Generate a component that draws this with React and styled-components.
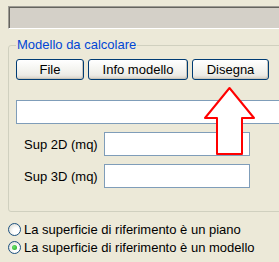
import React from 'react';
import styled, { createGlobalStyle } from 'styled-components';

const GlobalStyle = createGlobalStyle`
  html, body {
    margin: 0;
    padding: 0;
    background: #ece9d8;
  }
  body {
    font-family: "Liberation Sans", Arial, sans-serif;
    font-size: 13px;
    color: #000;
  }
`;

const Page = styled.div`
  position: relative;
  width: 279px;
  height: 262px;
  overflow: hidden;
  background: #ece9d8;
  padding: 6px 0 0 8px;
  box-sizing: border-box;
`;

const Wide = styled.div`
  width: 320px;
  display: flex;
  flex-direction: column;
`;

const StatusBar = styled.div`
  height: 21px;
  background: #d4d0c8;
  border-top: 1px solid #9d9b94;
  border-left: 1px solid #9d9b94;
  border-bottom: 1px solid #ffffff;
  box-shadow: inset 1px 1px 0 #65645e;
`;

const Group = styled.fieldset`
  margin: 9px 0 0 0;
  padding: 7px 7px 23px 7px;
  border: 1px solid #d0d0bf;
  border-radius: 3px;
  min-width: 0;
  display: flex;
  flex-direction: column;
`;

const Legend = styled.legend`
  padding: 0 1px;
  color: #0046d5;
  line-height: 14px;
`;

const ButtonRow = styled.div`
  display: flex;
  gap: 4px;
`;

const Button = styled.button`
  width: ${({ w }) => w}px;
  height: 21px;
  padding: 0;
  font-family: inherit;
  font-size: 13px;
  color: #000;
  border: 1px solid #003c74;
  border-radius: 3px;
  background: linear-gradient(#ffffff 0%, #f4f4f0 50%, #ecebe6 80%, #d6d0c5 100%);
  box-shadow: inset -1px -1px 0 #c9c6bb;
`;

const TextBox = styled.div`
  height: 22px;
  width: ${({ w }) => (w ? `${w}px` : 'auto')};
  background: #fff;
  border: 1px solid #7f9db9;
`;

const WideBox = styled(TextBox)`
  margin-top: 20px;
`;

const FieldRow = styled.div`
  display: flex;
  align-items: center;
  padding-left: 8px;
  margin-top: 8px;
`;

const Label = styled.span`
  width: 80px;
`;

const RadioList = styled.div`
  margin-top: 8px;
  display: flex;
  flex-direction: column;
`;

const RadioRow = styled.div`
  height: 18px;
  display: flex;
  align-items: center;
  gap: 3px;
`;

const RadioDot = styled.span`
  width: 11px;
  height: 11px;
  border: 1px solid #1c5180;
  border-radius: 50%;
  background: radial-gradient(circle at 65% 65%, #ffffff 30%, #e2e2dc 75%, #cbcbc3 100%);
  display: flex;
  align-items: center;
  justify-content: center;
  &::after {
    content: '';
    width: 5px;
    height: 5px;
    border-radius: 50%;
    background: ${({ checked }) => (checked ? 'radial-gradient(circle at 40% 40%, #6be46b, #21a121)' : 'transparent')};
  }
`;

const Arrow = styled.svg`
  position: absolute;
  left: 0;
  top: 0;
  pointer-events: none;
`;

const App = () => (
  <>
    <GlobalStyle />
    <Page>
      <Wide>
        <StatusBar />
        <Group>
          <Legend>Modello da calcolare</Legend>
          <ButtonRow>
            <Button w={68}>File</Button>
            <Button w={100}>Info modello</Button>
            <Button w={77}>Disegna</Button>
          </ButtonRow>
          <WideBox />
          <FieldRow>
            <Label>Sup 2D (mq)</Label>
            <TextBox w={144} />
          </FieldRow>
          <FieldRow>
            <Label>Sup 3D (mq)</Label>
            <TextBox w={144} />
          </FieldRow>
        </Group>
        <RadioList>
          <RadioRow>
            <RadioDot />
            <span>La superficie di riferimento è un piano</span>
          </RadioRow>
          <RadioRow>
            <RadioDot checked />
            <span>La superficie di riferimento è un modello</span>
          </RadioRow>
        </RadioList>
      </Wide>
      <Arrow width="279" height="262" viewBox="0 0 279 262">
        <polygon
          points="229.5,88 254,118 242,118 242,154 217,154 217,118 205,118"
          fill="#fff"
          stroke="#ff0000"
          strokeWidth="2"
          strokeLinejoin="round"
        />
      </Arrow>
    </Page>
  </>
);

export default App;
